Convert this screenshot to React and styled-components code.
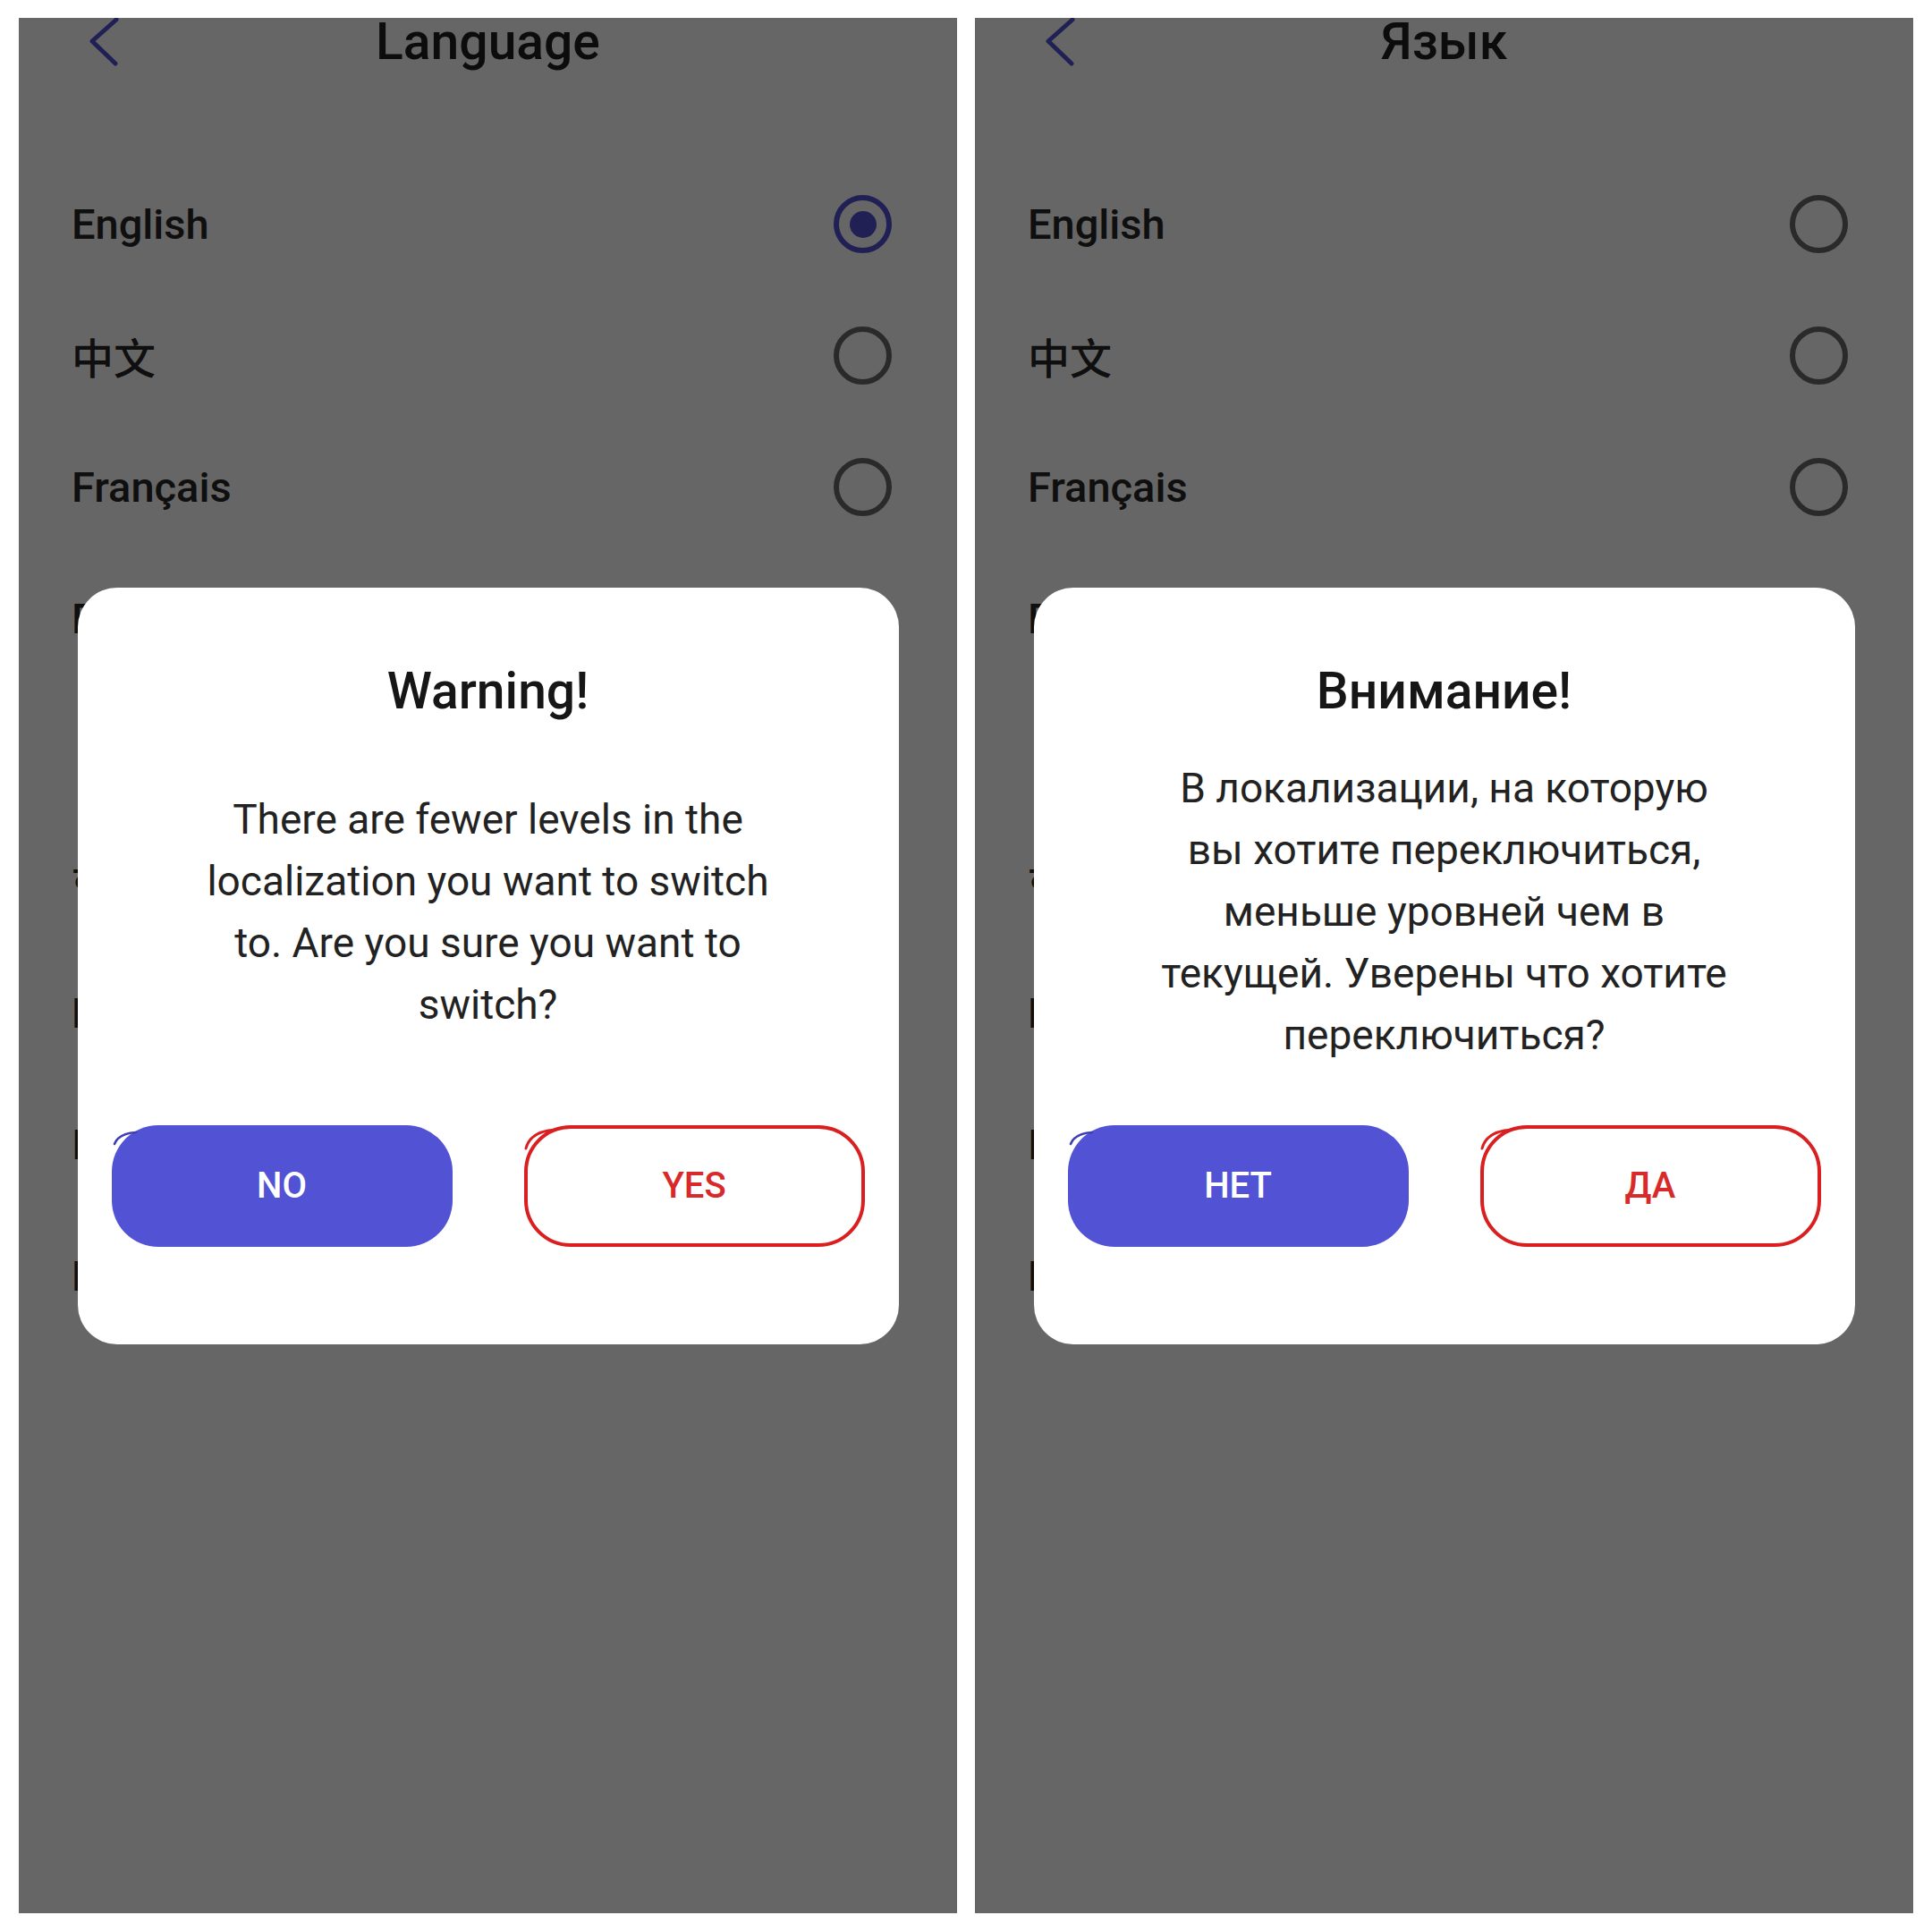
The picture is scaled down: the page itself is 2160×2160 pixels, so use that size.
import React from 'react'
import styled, { createGlobalStyle } from 'styled-components'

const GlobalStyle = createGlobalStyle`
  html, body {
    margin: 0;
    padding: 0;
    background: #ffffff;
  }
  * {
    box-sizing: border-box;
  }
`

const BRAND = '#5252d4'
const DANGER = '#d91f1f'

const Page = styled.div`
  display: flex;
  gap: 20px;
  width: 2160px;
  height: 2160px;
  padding: 20px 21px 21px;
  background: #ffffff;
  font-family: Roboto, "Noto Sans CJK SC", "Noto Sans CJK KR", sans-serif;
`

const Phone = styled.div`
  position: relative;
  width: 1049px;
  height: 2119px;
  background: #ffffff;
  overflow: hidden;
`

const Header = styled.div`
  display: grid;
  grid-template-columns: 1fr auto 1fr;
  align-items: center;
  height: 52px;
`

const Back = styled.div`
  display: flex;
  align-items: center;
  padding-left: 78px;
`

const Title = styled.h1`
  margin: 0;
  font-size: 57px;
  line-height: 52px;
  font-weight: 500;
  color: #1e1e1e;
`

const List = styled.div`
  display: flex;
  flex-direction: column;
  margin-top: 105px;
`

const Row = styled.div`
  display: flex;
  align-items: center;
  justify-content: space-between;
  height: 147px;
  padding: 0 73px 0 59px;
`

const Label = styled.span`
  font-size: 47px;
  font-weight: 500;
  color: #262626;
`

const Radio = styled.span`
  display: flex;
  align-items: center;
  justify-content: center;
  width: 65px;
  height: 65px;
  border-radius: 50%;
  border: 6px solid ${p => (p.$checked ? BRAND : '#6a6a6a')};

  &::after {
    content: '';
    display: ${p => (p.$checked ? 'block' : 'none')};
    width: 30px;
    height: 30px;
    border-radius: 50%;
    background: ${BRAND};
  }
`

const Overlay = styled.div`
  position: absolute;
  inset: 0;
  display: flex;
  align-items: center;
  justify-content: center;
  background: rgba(0, 0, 0, 0.6);
`

const Dialog = styled.div`
  display: flex;
  flex-direction: column;
  align-items: center;
  width: 918px;
  height: 846px;
  padding: 80px 38px 109px;
  border-radius: 44px;
  background: #ffffff;
`

const DialogTitle = styled.h2`
  margin: 0;
  font-size: 57px;
  line-height: 72px;
  font-weight: 500;
  color: #161616;
`

const Body = styled.div`
  flex: 1;
  display: flex;
  align-items: center;
  justify-content: center;
  margin-bottom: 27px;
`

const Message = styled.p`
  width: 660px;
  margin: 0;
  font-size: 46px;
  line-height: 69px;
  text-align: center;
  color: #222222;
`

const Buttons = styled.div`
  display: flex;
  justify-content: space-between;
  width: 100%;
`

const Button = styled.button`
  position: relative;
  display: flex;
  align-items: center;
  justify-content: center;
  width: 381px;
  height: 136px;
  border-radius: 52px;
  font-family: Roboto, sans-serif;
  font-size: 40px;
  font-weight: 500;
  cursor: pointer;
  border: ${p => (p.$outline ? `4px solid ${DANGER}` : 'none')};
  background: ${p => (p.$outline ? '#ffffff' : BRAND)};
  color: ${p => (p.$outline ? '#d82a2a' : '#ffffff')};
`

const Hook = styled.svg`
  position: absolute;
  top: ${p => (p.$outline ? '-4px' : '0')};
  left: ${p => (p.$outline ? '-4px' : '0')};
  overflow: visible;
`

const Chevron = () => (
  <svg width="36" height="54" viewBox="0 0 36 54">
    <path d="M31 2 L4 26 L30 51" fill="none" stroke={BRAND} strokeWidth="5" strokeLinecap="round" strokeLinejoin="round" />
  </svg>
)

const Tail = ({ outline }) => (
  <Hook $outline={outline} width="40" height="30" viewBox="0 0 40 30">
    {outline ? (
      <path d="M2 26 C5 14 15 6 36 5" fill="none" stroke={DANGER} strokeWidth="3" strokeLinecap="round" />
    ) : (
      <path d="M3 21 C6 13 13 9 27 8" fill="none" stroke="#3d3db8" strokeWidth="2.5" strokeLinecap="round" />
    )}
  </Hook>
)

const LANGUAGES = ['English', '中文', 'Français', 'Deutsch', '日本語', '한국어', 'Русский', 'Italiano', 'Português']

const screens = [
  {
    title: 'Language',
    checked: 0,
    warning: 'Warning!',
    message: 'There are fewer levels in the localization you want to switch to. Are you sure you want to switch?',
    no: 'NO',
    yes: 'YES',
  },
  {
    title: 'Язык',
    checked: -1,
    warning: 'Внимание!',
    message: 'В локализации, на которую вы хотите переключиться, меньше уровней чем в текущей. Уверены что хотите переключиться?',
    no: 'НЕТ',
    yes: 'ДА',
  },
]

const LanguageScreen = ({ screen }) => (
  <Phone>
    <Header>
      <Back>
        <Chevron />
      </Back>
      <Title>{screen.title}</Title>
      <div />
    </Header>

    <List>
      {LANGUAGES.map((name, i) => (
        <Row key={name}>
          <Label>{name}</Label>
          <Radio $checked={i === screen.checked} />
        </Row>
      ))}
    </List>

    <Overlay>
      <Dialog>
        <DialogTitle>{screen.warning}</DialogTitle>
        <Body>
          <Message>{screen.message}</Message>
        </Body>
        <Buttons>
          <Button>
            <Tail />
            {screen.no}
          </Button>
          <Button $outline>
            <Tail outline />
            {screen.yes}
          </Button>
        </Buttons>
      </Dialog>
    </Overlay>
  </Phone>
)

export default function App() {
  return (
    <Page>
      <GlobalStyle />
      {screens.map(s => (
        <LanguageScreen key={s.title} screen={s} />
      ))}
    </Page>
  )
}
